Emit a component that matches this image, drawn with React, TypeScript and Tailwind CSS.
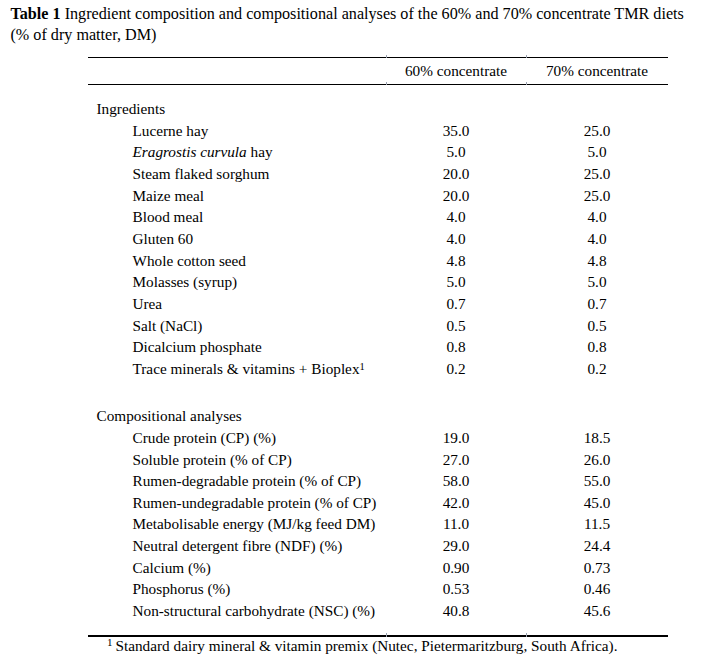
const ingredients: [React.ReactNode, string, string][] = [
  ["Lucerne hay", "35.0", "25.0"],
  [<><i>Eragrostis curvula</i> hay</>, "5.0", "5.0"],
  ["Steam flaked sorghum", "20.0", "25.0"],
  ["Maize meal", "20.0", "25.0"],
  ["Blood meal", "4.0", "4.0"],
  ["Gluten 60", "4.0", "4.0"],
  ["Whole cotton seed", "4.8", "4.8"],
  ["Molasses (syrup)", "5.0", "5.0"],
  ["Urea", "0.7", "0.7"],
  ["Salt (NaCl)", "0.5", "0.5"],
  ["Dicalcium phosphate", "0.8", "0.8"],
  [<>Trace minerals &amp; vitamins + Bioplex<sup className="top-[-4px] text-[10.5px]">1</sup></>, "0.2", "0.2"],
];

const analyses: [string, string, string][] = [
  ["Crude protein (CP) (%)", "19.0", "18.5"],
  ["Soluble protein (% of CP)", "27.0", "26.0"],
  ["Rumen-degradable protein (% of CP)", "58.0", "55.0"],
  ["Rumen-undegradable protein (% of CP)", "42.0", "45.0"],
  ["Metabolisable energy (MJ/kg feed DM)", "11.0", "11.5"],
  ["Neutral detergent fibre (NDF) (%)", "29.0", "24.4"],
  ["Calcium (%)", "0.90", "0.73"],
  ["Phosphorus (%)", "0.53", "0.46"],
  ["Non-structural carbohydrate (NSC) (%)", "40.8", "45.6"],
];

// horizontal rule with the little column ticks sticking up
function Rule() {
  return (
    <div className="flex h-[1.5px] items-end">
      <div className="h-[1.5px] w-[298px] bg-black" />
      <div className="h-[3.5px] w-px bg-gray-400" />
      <div className="h-[1.5px] w-[139px] bg-black" />
      <div className="h-[3.5px] w-px bg-gray-400" />
      <div className="h-[1.5px] w-[141px] bg-black" />
    </div>
  );
}

function Row({ label, a, b }: { label: React.ReactNode; a: string; b: string }) {
  return (
    <div className="grid h-[21.65px] grid-cols-[298px_140px_142px] items-center">
      <div className="pl-[44.5px]">{label}</div>
      <div className="text-center">{a}</div>
      <div className="text-center">{b}</div>
    </div>
  );
}

export default function App() {
  return (
    <div className="h-[660px] w-[721px] overflow-hidden bg-white font-['Liberation_Serif','Times_New_Roman',serif] text-[15.25px] leading-none text-black">
      <div className="pl-[10.5px] pt-[4px] text-[16.15px] leading-[20.5px]">
        <b>Table 1</b> Ingredient composition and compositional analyses of the 60% and 70% concentrate TMR diets
        <br />(% of dry matter, DM)
      </div>

      <div className="ml-[88px] mt-[11.5px] w-[580px]">
        <Rule />
        <div className="grid h-[25.75px] grid-cols-[298px_140px_142px] items-center">
          <div />
          <div className="text-center">60% concentrate</div>
          <div className="text-center">70% concentrate</div>
        </div>
        <Rule />

        <div className="pt-[12.75px]">
          <div className="flex h-[21.65px] items-center pl-[8.5px]">Ingredients</div>
          {ingredients.map(([l, a, b], i) => (
            <Row key={i} label={l} a={a} b={b} />
          ))}
          <div className="h-[25.75px]" />
          <div className="flex h-[21.65px] items-center pl-[8.5px]">Compositional analyses</div>
          {analyses.map(([l, a, b], i) => (
            <Row key={i} label={l} a={a} b={b} />
          ))}
        </div>

        <div className="mt-[14px]">
          <Rule />
        </div>
        <div className="pl-[19px] pt-[0.5px] leading-[17px]">
          <sup className="top-[-5px] mr-[3px] text-[11px]">1</sup>Standard dairy mineral &amp; vitamin premix (Nutec, Pietermaritzburg, South Africa).
        </div>
      </div>
    </div>
  );
}
